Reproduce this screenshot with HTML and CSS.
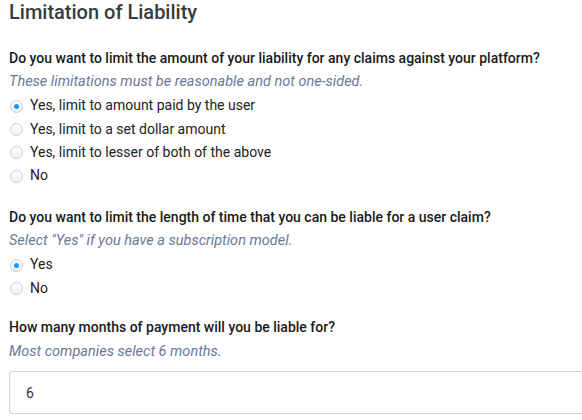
FILE: index.html
```html
<!DOCTYPE html>
<html>
<head>
<meta charset="utf-8">
<link rel="stylesheet" href="styles.css">
</head>
<body>
<div class="page">
  <h2 class="title">Limitation of Liability</h2>

  <div class="question">
    <div class="label">Do you want to limit the amount of your liability for any claims against your platform?</div>
    <div class="help">These limitations must be reasonable and not one-sided.</div>
    <div class="options">
      <label class="option"><span class="radio checked"></span>Yes, limit to amount paid by the user</label>
      <label class="option"><span class="radio"></span>Yes, limit to a set dollar amount</label>
      <label class="option"><span class="radio"></span>Yes, limit to lesser of both of the above</label>
      <label class="option"><span class="radio"></span>No</label>
    </div>
  </div>

  <div class="question">
    <div class="label">Do you want to limit the length of time that you can be liable for a user claim?</div>
    <div class="help">Select "Yes" if you have a subscription model.</div>
    <div class="options">
      <label class="option"><span class="radio checked"></span>Yes</label>
      <label class="option"><span class="radio"></span>No</label>
    </div>
  </div>

  <div class="question">
    <div class="label">How many months of payment will you be liable for?</div>
    <div class="help help-gap">Most companies select 6 months.</div>
    <div class="input">6</div>
  </div>
</div>
</body>
</html>
```
FILE: styles.css
```css
* { box-sizing: border-box; }
html, body { margin: 0; padding: 0; background: #fff; }
body {
  font-family: Roboto, "Liberation Sans", sans-serif;
  color: #212529;
  width: 582px;
  height: 420px;
  overflow: hidden;
}
.page {
  padding: 0 0 0 9px;
}
.title {
  margin: 0;
  font-size: 20px;
  font-weight: 500;
  line-height: 24px;
  height: 24px;
  color: #363b42;
}
.question {
  margin-top: 24px;
}
.question + .question { margin-top: 20px; }
.question:last-child { margin-top: 18px; }
.label {
  font-size: 14px;
  font-weight: 500;
  line-height: 20px;
  color: #1a1a1a;
}
.help {
  font-size: 14.5px;
  font-style: italic;
  line-height: 20px;
  margin-top: 4px;
  color: #6a7896;
}
.question:last-child .help { margin-top: 5px; }
.options {
  display: flex;
  flex-direction: column;
  margin-top: 1.5px;
}
.option {
  display: flex;
  align-items: center;
  gap: 7px;
  height: 23.4px;
  font-size: 14px;
  color: #222;
}
.radio {
  width: 13px;
  height: 13px;
  border-radius: 50%;
  border: 1px solid #caced4;
  background: linear-gradient(#ffffff, #eceef1);
  display: flex;
  align-items: center;
  justify-content: center;
  margin: 2px 0 0 1px;
}
.radio.checked::after {
  content: "";
  width: 5px;
  height: 5px;
  border-radius: 50%;
  background: #2196f3;
}
.help-gap { margin-bottom: 9px; }
.input {
  height: 43px;
  border: 1px solid #ced2da;
  border-right: none;
  border-radius: 4px 0 0 4px;
  padding: 0 16px;
  display: flex;
  align-items: center;
  font-size: 14px;
  color: #333;
}
```
